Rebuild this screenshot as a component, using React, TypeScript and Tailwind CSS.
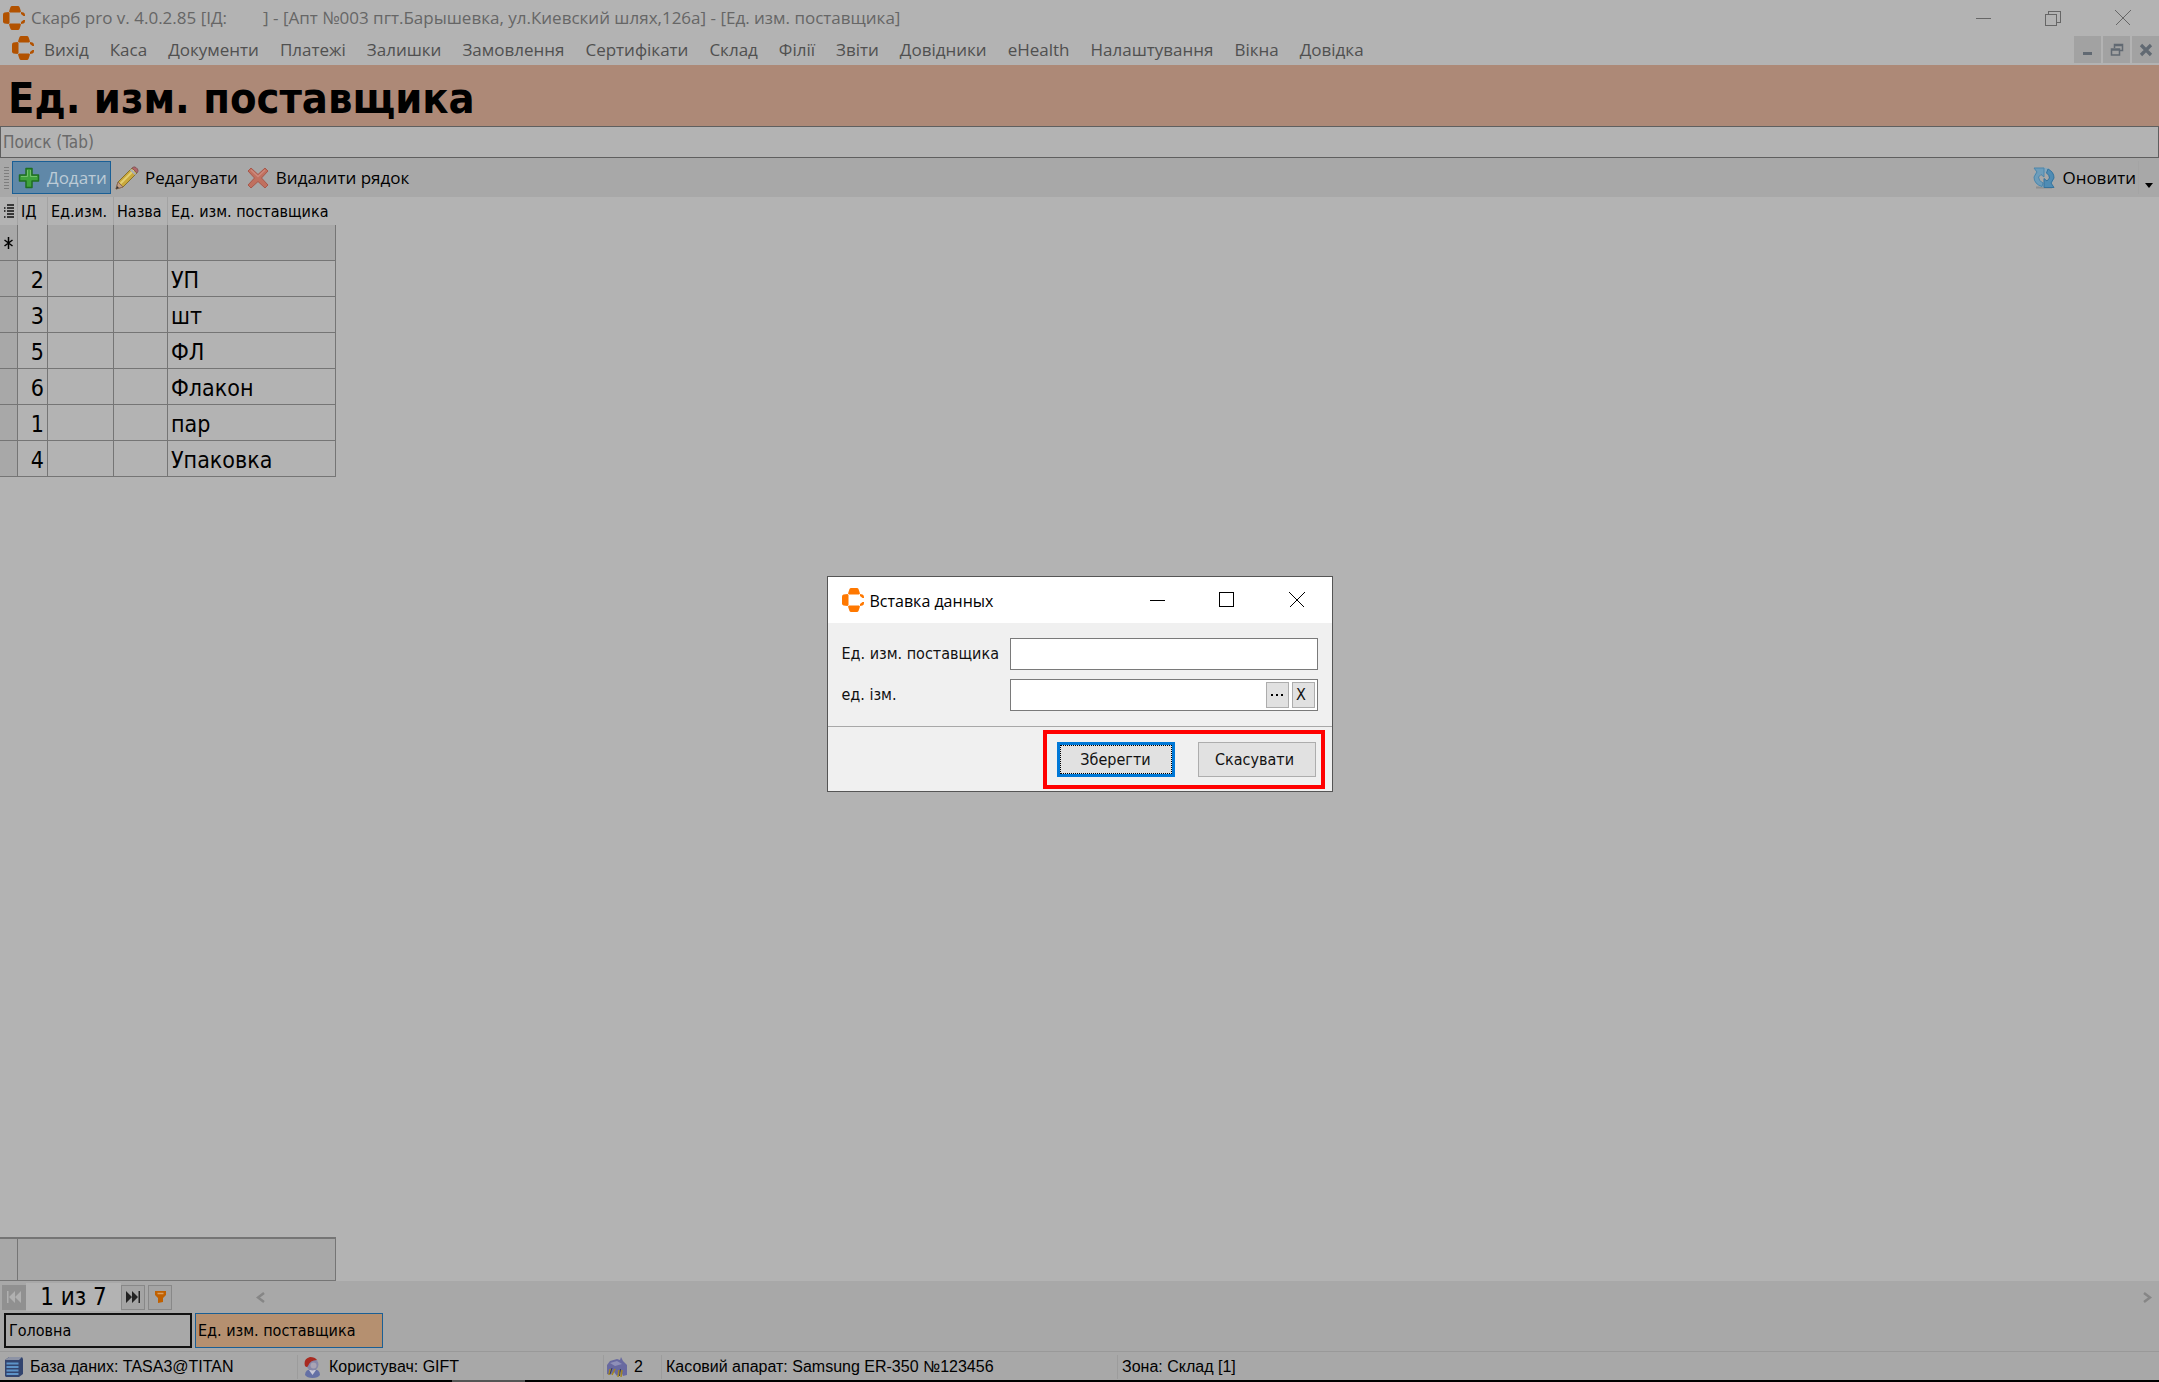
import type { ReactNode } from "react";

const menuItems = [
  "Вихід",
  "Каса",
  "Документи",
  "Платежі",
  "Залишки",
  "Замовлення",
  "Сертифікати",
  "Склад",
  "Філії",
  "Звіти",
  "Довідники",
  "eHealth",
  "Налаштування",
  "Вікна",
  "Довідка",
];

const rows = [
  { id: 2, name: "УП" },
  { id: 3, name: "шт" },
  { id: 5, name: "ФЛ" },
  { id: 6, name: "Флакон" },
  { id: 1, name: "пар" },
  { id: 4, name: "Упаковка" },
];

function Logo({ className }: { className: string }) {
  return (
    <svg width="22" height="24" viewBox="0 0 22 24" fill="currentColor" className={className}>
      <path d="M6 5.500L7.500 1Q8 0 9 0h6q1 0 1.500 1L18 5.500 17 6.500H7z" />
      <path d="M6.500 7L5.500 6 1.500 6.500Q0 7 0 8.500v7Q0 17 1.500 17.500l4 .5 1-1z" />
      <path d="M6 18.500L7.500 23q.5 1 1.500 1h6q1 0 1.500-1l1.500-4.500-1-1H7z" />
      <path d="M18 6l2.500.5Q22 7 22 9v1h-1.500L18 8zM18 18l2.500-.5Q22 17 22 15v-1h-1.500L18 16z" />
    </svg>
  );
}

function WindowButton({ label, className, children }: { label: string; className: string; children: ReactNode }) {
  return (
    <button aria-label={label} className={`flex items-center justify-center ${className}`}>
      <svg width="16" height="16" viewBox="0 0 16 16" fill="none" stroke="currentColor" shapeRendering="crispEdges">
        {children}
      </svg>
    </button>
  );
}

function TitleBar() {
  return (
    <div className="flex h-9 items-center pl-[3px] font-['Open_Sans',sans-serif] text-[17px] leading-6 text-[#666]">
      <Logo className="mr-1.5 text-[#b25200]" />
      <span className="mr-9 whitespace-pre">Скарб pro v. 4.0.2.85 [ІД:</span>
      <span className="whitespace-pre">] - [Апт №003 пгт.Барышевка, ул.Киевский шлях,126а] - [Ед. изм. поставщика]</span>
      <div className="ml-auto flex">
        <WindowButton label="Згорнути" className="h-8 w-[69px]">
          <path d="M0 8.500h15" />
        </WindowButton>
        <WindowButton label="Відновити" className="h-8 w-[69px]">
          <path d="M.5 4.500h11v11H.500zM3.500 4V1.500h12v11H12" />
        </WindowButton>
        <WindowButton label="Закрити" className="h-8 w-[72px]">
          <path d="M.5.500l15 15M15.500.500l-15 15" />
        </WindowButton>
      </div>
    </div>
  );
}

function MenuBar() {
  return (
    <nav className="flex h-[29px] items-start pl-3 font-['Open_Sans',sans-serif] text-[17px] leading-7 text-[#505050]">
      <Logo className="mr-2.5 text-[#b25200]" />
      <div className="flex gap-[21px]">
        {menuItems.map((item) => (
          <a key={item} href="#" className="whitespace-nowrap">
            {item}
          </a>
        ))}
      </div>
      <div className="ml-auto flex gap-0.5 text-[#616972]">
        <button aria-label="Згорнути вікно" className="flex h-[27px] w-[27px] items-center justify-center bg-[#a2a2a2]">
          <svg width="14" height="14" viewBox="0 0 14 14" fill="currentColor">
            <path d="M2 9h9v3H2z" />
          </svg>
        </button>
        <button aria-label="Відновити вікно" className="flex h-[27px] w-[27px] items-center justify-center bg-[#a2a2a2]">
          <svg width="14" height="14" viewBox="0 0 14 14" fill="none" stroke="currentColor" strokeWidth="1.500">
            <path d="M4.500 5V1.500h8v6H10M1.500 6h8v6h-8zM1.500 7h8M4.500 2.500h8" />
          </svg>
        </button>
        <button aria-label="Закрити вікно" className="flex h-[27px] w-[27px] items-center justify-center bg-[#a2a2a2]">
          <svg width="14" height="14" viewBox="0 0 14 14" stroke="currentColor" strokeWidth="3.200">
            <path d="M2 2l10 10M12 2L2 12" />
          </svg>
        </button>
      </div>
    </nav>
  );
}

function Toolbar() {
  return (
    <div className="flex h-[39px] items-center bg-[#a8a8a8] pl-1 font-['Open_Sans',sans-serif] text-[17px] leading-6 text-black">
      <svg width="5" height="24" viewBox="0 0 5 24" stroke="#7d7d7d" className="mr-[3px]">
        <path d="M0 1.500h5M0 4.500h5M0 7.500h5M0 10.500h5M0 13.500h5M0 16.500h5M0 19.500h5M0 22.500h5" />
      </svg>
      <button className="flex h-[33px] w-[99px] items-center gap-[7px] border border-[#1a5f95] bg-[#6088a8] pl-[5px] text-[#bccbd6]">
        <svg width="22" height="22" viewBox="0 0 22 22">
          <path
            d="M8 1.500h6v6.500h6.500v6H14v6.500H8V14H1.500V8H8z"
            fill="#3fa23c"
            stroke="#1f6e22"
            strokeWidth="1.500"
            strokeLinejoin="round"
          />
          <path d="M9.500 3v6.500H3M12.500 3v6.500H19" fill="none" stroke="#73c06c" />
        </svg>
        Додати
      </button>
      <button className="flex h-[33px] items-center gap-1.5 pl-1">
        <svg width="24" height="24" viewBox="0 0 24 24">
          <path d="M1 23l2-7L17 2l5 5L8 21z" fill="#c9a83c" stroke="#86702c" />
          <path d="M5.500 17.500L19 4" stroke="#e3cf72" strokeWidth="2" />
          <path d="M1 23l2-7 5 5z" fill="#c4a084" stroke="#8a6a58" />
          <path d="M1 23l1-3 2 2z" fill="#333" />
          <path d="M17 2q2-2 4-.5l1.500 1.500q1.500 2-.5 4z" fill="#b0666a" stroke="#86585a" />
          <path d="M15.500 3.500l5 5" stroke="#a9adb3" strokeWidth="2" />
        </svg>
        Редагувати
      </button>
      <button className="flex h-[33px] items-center gap-[7px] pl-[9px]">
        <svg width="22" height="22" viewBox="0 0 22 22">
          <path
            d="M4 1l7 6.500L18 1l3 3-6.500 7 6.500 7-3 3-7-6.500L4 21l-3-3 6.500-7L1 4z"
            fill="#c0705f"
            stroke="#a8574a"
            strokeLinejoin="round"
          />
          <path d="M4 3l7 6.500L18 3" fill="none" stroke="#cc897c" strokeWidth="1.500" />
        </svg>
        Видалити рядок
      </button>
      <button className="ml-auto flex h-[33px] items-center gap-[7px]">
        <svg width="22" height="22" viewBox="0 0 22 22">
          <path d="M3 20.500h16" stroke="#8f8f8f" strokeWidth="2" />
          <circle cx="11" cy="10.500" r="7.500" fill="none" stroke="#86a7bc" strokeWidth="5" />
          <path d="M1 1h10v9L8 7.500 5.500 10q0 4 4.500 6l-1 3.500Q1 17 1 10l3-5z" fill="#6d9dbb" stroke="#4c86ab" />
          <path d="M21 20.500H11v-9l3 2.500 2.500-3q0-3-3-5L15 2q6 3 6 9l-3 5z" fill="#4f8cb4" stroke="#35739d" />
        </svg>
        Оновити
      </button>
      <button aria-label="Параметри панелі" className="ml-0.5 flex h-[33px] w-[21px] items-end justify-center border-l border-[#a4a4a4] pb-1.5">
        <svg width="8" height="5" viewBox="0 0 8 5">
          <path d="M0 0h8L4 5z" />
        </svg>
      </button>
    </div>
  );
}

function DataGrid() {
  return (
    <table className="w-[336px] table-fixed border-separate border-spacing-0 text-black">
      <colgroup>
        <col className="w-[18px]" />
        <col className="w-[30px]" />
        <col className="w-[66px]" />
        <col className="w-[54px]" />
        <col className="w-[168px]" />
      </colgroup>
      <thead>
        <tr className="h-7 text-left text-[16px] leading-5 whitespace-nowrap">
          <th className="border-r border-[#a3a3a3] pl-1">
            <svg width="10" height="14" viewBox="0 0 10 14" stroke="#111" strokeWidth="1.500">
              <path d="M3 1h7M3 4h7M3 7h7M3 10h7M3 13h7M0 4h1.500M0 7h1.500M0 13h1.500" />
            </svg>
          </th>
          <th className="border-r border-[#a3a3a3] pt-0.5 pl-[3px] font-normal">ІД</th>
          <th className="border-r border-[#a3a3a3] pt-0.5 pl-[3px] font-normal">Ед.изм.</th>
          <th className="border-r border-[#a3a3a3] pt-0.5 pl-[3px] font-normal">Назва</th>
          <th className="pt-0.5 pl-[3px] font-normal">Ед. изм. поставщика</th>
        </tr>
      </thead>
      <tbody className="text-[23px] leading-7">
        <tr className="h-9">
          <td className="border-r border-b border-[#757575] bg-[#a8a8a8] pl-1">
            <svg width="9" height="12" viewBox="0 0 9 12" stroke="#000" strokeWidth="1.500">
              <path d="M4.500 0v12M.5 3l8 6M8.500 3l-8 6" />
            </svg>
          </td>
          <td className="border-r border-b border-[#757575]" />
          <td className="border-r border-b border-[#757575] bg-[#a8a8a8]" />
          <td className="border-r border-b border-[#757575] bg-[#a8a8a8]" />
          <td className="border-r border-b border-[#757575] bg-[#a8a8a8]" />
        </tr>
        {rows.map((row) => (
          <tr key={row.id} className="h-9">
            <td className="border-r border-b border-[#757575] bg-[#a8a8a8]" />
            <td className="border-r border-b border-[#757575] pt-0.5 pr-[3px] text-right">{row.id}</td>
            <td className="border-r border-b border-[#757575]" />
            <td className="border-r border-b border-[#757575]" />
            <td className="border-r border-b border-[#757575] pt-0.5 pl-[3px]">{row.name}</td>
          </tr>
        ))}
      </tbody>
    </table>
  );
}

function Navigator() {
  return (
    <div className="flex h-[30px] items-center bg-[#a8a8a8] pt-0.5 pl-0.5 text-black">
      <button disabled aria-label="Перший запис" className="flex h-[25px] w-6 items-center justify-center bg-[#909090] text-[#b0b0b0]">
        <svg width="14" height="12" viewBox="0 0 14 12" fill="currentColor">
          <path d="M0 0h1.500v12H0zM8 0v12L2 6zM14 0v12L8 6z" />
        </svg>
      </button>
      <span className="w-[95px] bg-[#b3b3b3] text-center text-[24px] leading-7">1 из 7</span>
      <button aria-label="Останній запис" className="flex h-[25px] w-6 items-center justify-center border border-[#888] bg-[#a4a4a4] text-[#222]">
        <svg width="14" height="12" viewBox="0 0 14 12" fill="currentColor">
          <path d="M14 0h-1.500v12H14zM6 0v12l6-6zM0 0v12l6-6z" />
        </svg>
      </button>
      <button aria-label="Фільтр" className="ml-[3px] flex h-[25px] w-6 items-center justify-center border border-[#888] bg-[#a4a4a4]">
        <svg width="11" height="12" viewBox="0 0 11 12">
          <path d="M0 0h11v4L8 7v4l-5 1V7L0 4z" fill="#c06000" />
          <path d="M2.500 2.500h6" stroke="#dca060" strokeWidth="1.500" />
        </svg>
      </button>
      <div className="flex grow items-center justify-between pr-[7px] pl-[84px]">
        <button aria-label="Прокрутити ліворуч">
          <svg width="9" height="11" viewBox="0 0 9 11" fill="none" stroke="#868686" strokeWidth="2.500">
            <path d="M8 1L2 5.500 8 10" />
          </svg>
        </button>
        <button aria-label="Прокрутити праворуч">
          <svg width="9" height="11" viewBox="0 0 9 11" fill="none" stroke="#868686" strokeWidth="2.500">
            <path d="M1 1l6 4.500L1 10" />
          </svg>
        </button>
      </div>
    </div>
  );
}

function StatusBar() {
  return (
    <footer className="flex h-[29px] items-center border-t border-[#999] bg-[#a8a8a8] pt-0.5 font-['Liberation_Sans',sans-serif] text-[16px] leading-6 whitespace-nowrap text-black">
      <div className="flex h-6 w-[298px] items-center gap-[7px] border-r border-[#9c9c9c] pl-[5px]">
        <svg width="18" height="20" viewBox="0 0 18 20">
          <path d="M0 3l4-3h13l1 2v15l-4 3H1l-1-1z" fill="#33446e" />
          <path d="M0 3l4-3h13l-3 3z" fill="#8d93a5" />
          <path d="M1.500 6.500h12M1.500 10h12M1.500 13.500h12M1.500 17h12" stroke="#5d93c8" strokeWidth="2" />
        </svg>
        База даних: TASA3@TITAN
      </div>
      <div className="flex h-6 w-[306px] items-center gap-2 border-r border-[#9c9c9c] pl-1.5">
        <svg width="17" height="21" viewBox="0 0 17 21">
          <path d="M1 18q0-6 7.500-6t7.500 6q-2 3-7.500 3T1 18z" fill="#6470a5" />
          <path d="M5 13l3.500 5 3.500-5z" fill="#c8c8d8" />
          <circle cx="8.500" cy="7.500" r="6" fill="#8788a8" />
          <circle cx="9.500" cy="8.500" r="3" fill="#a9a4b4" />
          <path d="M1 9q-2-7 5-9 5 0 7 3-7 0-9 6-1 2-3 0z" fill="#a82a20" />
        </svg>
        Користувач: GIFT
      </div>
      <div className="flex h-6 w-[58px] items-center gap-[7px] border-r border-[#9c9c9c] pl-[3px]">
        <svg width="20" height="21" viewBox="0 0 20 21">
          <path d="M0 8l3-4 7-2 3 1 1-3 2 4 4 4v10l-4 1-2-5-4 5-3-4-4 3-3-1z" fill="#6869a0" />
          <path d="M3 6l7-2 5 3-7 2z" fill="#8e8fb8" />
          <path d="M3 12l-1 6M8 12l-3 6M12 13l-1 7M15 13l-1 7" stroke="#a58820" strokeWidth="1.500" />
          <path d="M5 11l-2 6M13.500 12l-1 7" stroke="#3a3a50" />
        </svg>
        2
      </div>
      <div className="flex h-6 w-[456px] items-center border-r border-[#9c9c9c] pl-1">
        Касовий апарат: Samsung ER-350 №123456
      </div>
      <div className="flex h-6 items-center pl-1">Зона: Склад [1]</div>
    </footer>
  );
}

function InsertDialog() {
  return (
    <div
      role="dialog"
      aria-labelledby="dialog-title"
      className="w-[506px] border border-[#555] bg-[#f0f0f0] text-[16px] leading-5 text-[#111]"
    >
      <div className="flex h-[46px] items-center bg-white pl-3.5 text-black">
        <Logo className="mr-1.5 text-[#ff7800]" />
        <h2 id="dialog-title" className="pt-0.5 font-['Open_Sans',sans-serif] text-[16px] leading-6">
          Вставка данных
        </h2>
        <div className="ml-auto flex">
          <WindowButton label="Згорнути" className="h-11 w-[69px]">
            <path d="M0 8.500h15" />
          </WindowButton>
          <WindowButton label="Розгорнути" className="h-11 w-[69px]">
            <path d="M.5.500h14v14H.500z" />
          </WindowButton>
          <WindowButton label="Закрити" className="h-11 w-[70px]">
            <path d="M.5.500l15 15M15.500.500l-15 15" />
          </WindowButton>
        </div>
      </div>
      <div className="grid grid-cols-[168px_1fr] items-center gap-y-[9px] py-[15px] pr-3.5 pl-3.5">
        <label htmlFor="supplier-unit">Ед. изм. поставщика</label>
        <input id="supplier-unit" className="h-8 border border-[#7a7a7a] bg-white px-1 outline-none" />
        <label htmlFor="unit">ед. ізм.</label>
        <div className="flex h-8 items-center gap-[3px] border border-[#7a7a7a] bg-white pr-0.5">
          <input id="unit" className="min-w-0 grow px-1 outline-none" />
          <button aria-label="Вибрати" className="flex h-[26px] w-[23px] items-center justify-center border border-[#adadad] bg-[#e1e1e1]">
            <svg width="12" height="2" viewBox="0 0 12 2">
              <path d="M0 0h2v2H0zM5 0h2v2H5zM10 0h2v2h-2z" />
            </svg>
          </button>
          <button className="h-[26px] w-[23px] border border-[#adadad] bg-[#e1e1e1] pr-1">X</button>
        </div>
      </div>
      <div className="flex justify-end border-t border-[#a8a8a8] pt-[3px] pr-[7px] pb-0.5">
        <div className="flex gap-[23px] border-4 border-[#f00] py-2 pr-[5px] pl-2.5">
          <button className="h-[35px] w-[118px] border-3 border-[#0078d7] bg-[#e1e1e1]">
            <span className="flex h-full items-center justify-center border border-dotted border-black">Зберегти</span>
          </button>
          <button className="h-[35px] w-[118px] border border-[#adadad] bg-[#e1e1e1] pr-1">Скасувати</button>
        </div>
      </div>
    </div>
  );
}

export default function App() {
  return (
    <div className="flex min-h-screen flex-col bg-[#b3b3b3] font-['DejaVu_Sans_Condensed','DejaVu_Sans',sans-serif]">
      <TitleBar />
      <MenuBar />
      <h1 className="flex h-[61px] items-center bg-[#ad8977] pt-1 pl-2 text-[43px] leading-[48px] font-bold text-black">
        Ед. изм. поставщика
      </h1>
      <input
        aria-label="Поиск"
        placeholder="Поиск (Tab)"
        className="h-8 border border-[#5f5f5f] bg-[#b3b3b3] px-0.5 text-[17px] leading-5 outline-none placeholder:text-[#6a6a6a]"
      />
      <Toolbar />
      <main className="flex grow flex-col">
        <DataGrid />
        <div className="mt-auto flex h-11 w-[336px] border-t-2 border-r border-b border-[#757575] bg-[#a8a8a8]">
          <div className="w-[18px] border-r border-[#757575]" />
        </div>
      </main>
      <Navigator />
      <div className="flex h-10 gap-[3px] bg-[#a8a8a8] pt-0.5 pl-1 text-[16px] leading-5 text-black">
        <button className="h-[35px] w-[188px] border-2 border-[#111] pl-[3px] text-left">Головна</button>
        <button className="h-[35px] w-[188px] border border-[#1a5f95] bg-[#b59070] pl-0.5 text-left">
          Ед. изм. поставщика
        </button>
      </div>
      <StatusBar />
      <div className="flex h-0.5 bg-black pl-[452px]">
        <div className="w-[73px] bg-[#555]" />
      </div>

      {/* Modal */}
      <div className="fixed inset-0 flex items-center justify-center pb-3.5">
        <InsertDialog />
      </div>
    </div>
  );
}
